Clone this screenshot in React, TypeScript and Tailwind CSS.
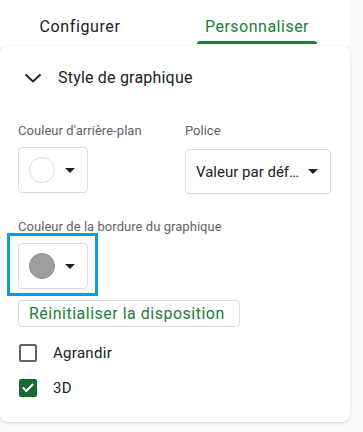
import { Check } from 'lucide-react';

const Caret = () => (
  <svg width="10" height="5" viewBox="0 0 10 5" className="shrink-0">
    <path d="M0 0 L10 0 L5 5 Z" fill="#202124" />
  </svg>
);

const ColorButton = ({ color, ring }: { color: string; ring: string }) => (
  <button className="flex h-[46px] w-[70px] items-center rounded-[4px] border border-[#dadce0] bg-white pl-[10px]">
    <span
      className="h-[26px] w-[26px] rounded-full border"
      style={{ backgroundColor: color, borderColor: ring }}
    />
    <span className="ml-[10px]">
      <Caret />
    </span>
  </button>
);

const App = () => {
  return (
    <div className="h-[432px] w-[363px] overflow-hidden bg-[#f8f9fa] font-['Roboto',sans-serif] text-[#202124]">
      <div className="w-[350px]">
        {/* Tabs */}
        <div className="flex h-[46px] gap-[57px] bg-white pl-[20px]">
          <div className="flex w-[120px] flex-col items-center">
            <span className="mt-[17px] text-[16px] leading-[20px] tracking-[0.6px]">Configurer</span>
          </div>
          <div className="flex w-[120px] flex-col items-center">
            <span className="mt-[17px] text-[16px] leading-[20px] tracking-[0.5px] text-[#188038]">Personnaliser</span>
            <span className="mt-auto mb-[2px] h-[3px] w-full rounded-t-[3px] bg-[#188038]" />
          </div>
        </div>

        {/* Card */}
        <div className="h-[376px] rounded-lg bg-white shadow-[0_1px_3px_rgba(60,64,67,0.2)]">
          <div className="flex h-[64px] items-center pl-[24px]">
            <svg width="18" height="10" viewBox="0 0 18 10">
              <path d="M1.5 1.5 L9 8.5 L16.5 1.5" fill="none" stroke="#202124" strokeWidth="2" />
            </svg>
            <span className="ml-[16px] text-[16px] leading-[20px] tracking-[0.2px]">Style de graphique</span>
          </div>

          <div className="px-[18px]">
            <div className="mt-[13px] flex">
              <div className="w-[167px]">
                <div className="text-[13px] leading-[16px] tracking-[0.05px] text-[#5f6368]">Couleur d'arrière-plan</div>
                <div className="mt-[8px]">
                  <ColorButton color="#ffffff" ring="#dadce0" />
                </div>
              </div>
              <div>
                <div className="text-[13px] leading-[16px] text-[#5f6368]">Police</div>
                <button className="mt-[10px] flex h-[45px] w-[146px] items-center justify-between rounded-[4px] border border-[#dadce0] bg-white pl-[10px] pr-[12px]">
                  <span className="text-[15px] leading-[20px]">Valeur par déf…</span>
                  <Caret />
                </button>
              </div>
            </div>

            <div className="mt-[25px] text-[13px] leading-[16px] tracking-[0.05px] text-[#5f6368]">
              Couleur de la bordure du graphique
            </div>
            <div className="relative mt-[8px] w-[70px]">
              <ColorButton color="#9e9e9e" ring="#8a8a8a" />
              <span className="pointer-events-none absolute -top-[10px] -left-[11px] -right-[10px] -bottom-[7px] border-[3px] border-[#0a9ee0]" />
            </div>

            <button className="mt-[11px] flex h-[27px] items-center rounded-[4px] border border-[#dadce0] bg-white pl-[10px] pr-[14px] text-[16px] leading-[20px] tracking-[0.5px] text-[#188038]">
              Réinitialiser la disposition
            </button>

            <div className="mt-[16px] flex flex-col gap-[15px]">
              <label className="flex items-center">
                <span className="ml-[1px] h-[18px] w-[18px] rounded-[2px] border-2 border-[#5f6368]" />
                <span className="ml-[16px] text-[15px] leading-[20px] tracking-[0.3px]">Agrandir</span>
              </label>
              <label className="flex items-center">
                <span className="ml-[1px] flex h-[18px] w-[18px] items-center justify-center rounded-[2px] bg-[#146c2e]">
                  <Check size={14} strokeWidth={3.5} color="#ffffff" />
                </span>
                <span className="ml-[16px] text-[15px] leading-[20px] tracking-[0.3px]">3D</span>
              </label>
            </div>
          </div>
        </div>
      </div>
    </div>
  );
};

export default App;
